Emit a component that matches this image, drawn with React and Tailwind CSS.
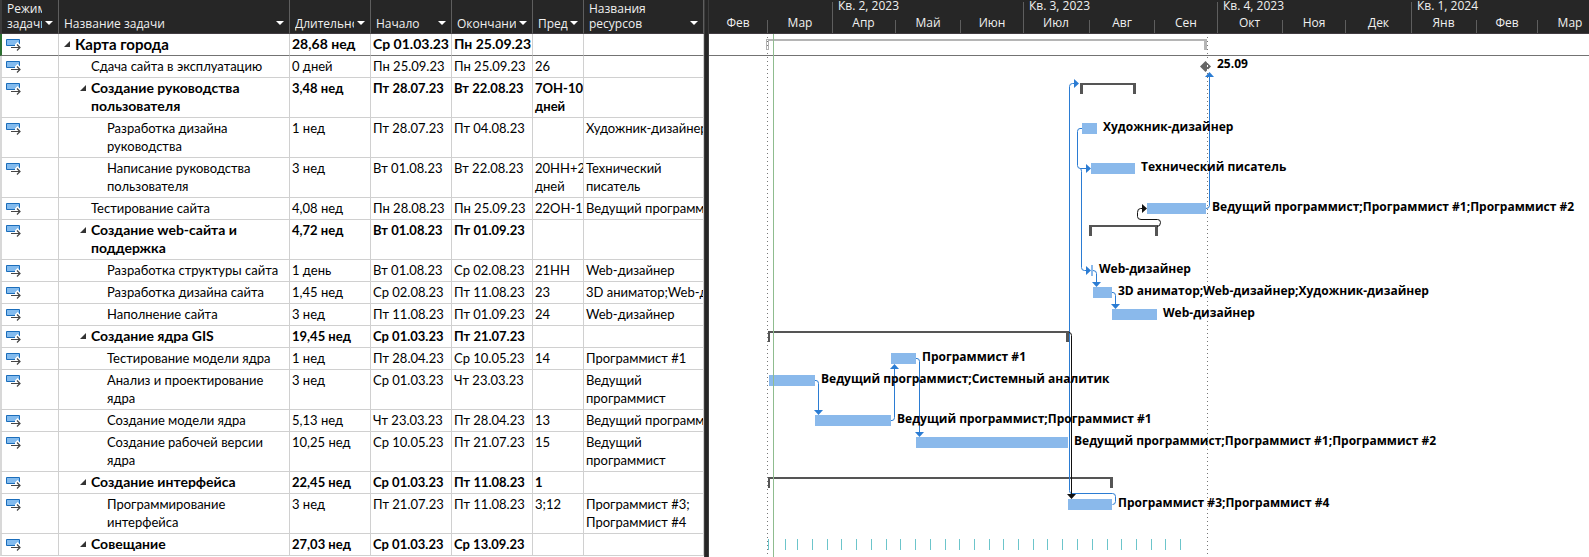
import React from "react";

const columns = [
  { label: "Режим\nзадачи", clip: "w-[35px]" },
  { label: "Название задачи", clip: "" },
  { label: "Длительность", clip: "w-[59px]" },
  { label: "Начало", clip: "" },
  { label: "Окончание", clip: "w-[59px]" },
  { label: "Пред", clip: "" },
  { label: "Названия\nресурсов", clip: "" },
];

const tasks = [
  { level: 0, summary: true, name: "Карта города", dur: "28,68 нед", start: "Ср 01.03.23", end: "Пн 25.09.23", pred: "", res: "" },
  { level: 1, name: "Сдача сайта в эксплуатацию", dur: "0 дней", start: "Пн 25.09.23", end: "Пн 25.09.23", pred: "26", res: "" },
  { level: 1, summary: true, name: "Создание руководства\nпользователя", dur: "3,48 нед", start: "Пт 28.07.23", end: "Вт 22.08.23", pred: "7ОН-10\nдней", res: "" },
  { level: 2, name: "Разработка дизайна\nруководства", dur: "1 нед", start: "Пт 28.07.23", end: "Пт 04.08.23", pred: "", res: "Художник-дизайнер" },
  { level: 2, name: "Написание руководства\nпользователя", dur: "3 нед", start: "Вт 01.08.23", end: "Вт 22.08.23", pred: "20НН+2\nдней", res: "Технический\nписатель" },
  { level: 1, name: "Тестирование сайта", dur: "4,08 нед", start: "Пн 28.08.23", end: "Пн 25.09.23", pred: "22ОН-1", res: "Ведущий программист" },
  { level: 1, summary: true, name: "Создание web-сайта и\nподдержка", dur: "4,72 нед", start: "Вт 01.08.23", end: "Пт 01.09.23", pred: "", res: "" },
  { level: 2, name: "Разработка структуры сайта", dur: "1 день", start: "Вт 01.08.23", end: "Ср 02.08.23", pred: "21НН", res: "Web-дизайнер" },
  { level: 2, name: "Разработка дизайна сайта", dur: "1,45 нед", start: "Ср 02.08.23", end: "Пт 11.08.23", pred: "23", res: "3D аниматор;Web-дизайнер" },
  { level: 2, name: "Наполнение сайта", dur: "3 нед", start: "Пт 11.08.23", end: "Пт 01.09.23", pred: "24", res: "Web-дизайнер" },
  { level: 1, summary: true, name: "Создание ядра GIS", dur: "19,45 нед", start: "Ср 01.03.23", end: "Пт 21.07.23", pred: "", res: "" },
  { level: 2, name: "Тестирование модели ядра", dur: "1 нед", start: "Пт 28.04.23", end: "Ср 10.05.23", pred: "14", res: "Программист #1" },
  { level: 2, name: "Анализ и проектирование\nядра", dur: "3 нед", start: "Ср 01.03.23", end: "Чт 23.03.23", pred: "", res: "Ведущий\nпрограммист" },
  { level: 2, name: "Создание модели ядра", dur: "5,13 нед", start: "Чт 23.03.23", end: "Пт 28.04.23", pred: "13", res: "Ведущий программист" },
  { level: 2, name: "Создание рабочей версии\nядра", dur: "10,25 нед", start: "Ср 10.05.23", end: "Пт 21.07.23", pred: "15", res: "Ведущий\nпрограммист" },
  { level: 1, summary: true, name: "Создание интерфейса", dur: "22,45 нед", start: "Ср 01.03.23", end: "Пт 11.08.23", pred: "1", res: "" },
  { level: 2, name: "Программирование\nинтерфейса", dur: "3 нед", start: "Пт 21.07.23", end: "Пт 11.08.23", pred: "3;12", res: "Программист #3;\nПрограммист #4" },
  { level: 1, summary: true, name: "Совещание", dur: "27,03 нед", start: "Ср 01.03.23", end: "Ср 13.09.23", pred: "", res: "" },
];

const indent = ["pl-[5px]", "pl-[21px]", "pl-[48px]"];

const quarters = [
  { label: "", months: [["Фев", "w-[58px]"], ["Мар", "w-[65px]"]] },
  { label: "Кв. 2, 2023", months: [["Апр", "w-[63px]"], ["Май", "w-[65px]"], ["Июн", "w-[63px]"]] },
  { label: "Кв. 3, 2023", months: [["Июл", "w-[66px]"], ["Авг", "w-[65px]"], ["Сен", "w-[63px]"]] },
  { label: "Кв. 4, 2023", months: [["Окт", "w-[65px]"], ["Ноя", "w-[63px]"], ["Дек", "w-[66px]"]] },
  { label: "Кв. 1, 2024", months: [["Янв", "w-[65px]"], ["Фев", "w-[61px]"], ["Мар", "w-[65px]"]] },
];

/* Chart geometry: x from the left edge of the timeline, y from the first row. */
const bars = [
  [373, 89, 15, "Художник-дизайнер"],
  [382, 129, 44, "Технический писатель"],
  [438, 169, 59, "Ведущий программист;Программист #1;Программист #2"],
  [382, 231, 2, "Web-дизайнер"],
  [384, 253, 19, "3D аниматор;Web-дизайнер;Художник-дизайнер"],
  [403, 275, 45, "Web-дизайнер"],
  [182, 319, 25, "Программист #1"],
  [60, 341, 46, "Ведущий программист;Системный аналитик"],
  [106, 381, 76, "Ведущий программист;Программист #1"],
  [207, 403, 152, "Ведущий программист;Программист #1;Программист #2"],
  [359, 465, 44, "Программист #3;Программист #4"],
];

const brackets = [
  [371, 49, 56, 3],
  [380, 191, 69, 3],
  [59, 297, 301, 2],
  [59, 443, 345, 2],
];

const links = [
  "M403.5 470.5 q3 0 3 -3 v-5 q0 -3 -3 -3 H362.5 q-2 0 -2 -3 V52.5 q0 -3 3 -3 h2",
  "M373 94.5 h-2 q-2.5 0 -2.5 3 V131.5 q0 3 3 3 h6",
  "M371 134.5 q1.500 0 1.500 3 V233.5 q0 3 3 3 h2",
  "M497 174.500 q3.500 0 3.500 -3 V42",
  "M384 236.500 q3.500 0 3.500 3 V248",
  "M403 258.500 h1 q2.500 0 2.500 3 V270",
  "M106 346.500 h1 q2.500 0 2.500 3 V376",
  "M182 386.500 h1 q2.500 0 2.500 -3 V335",
  "M207 324.500 h1 q2.500 0 2.500 3 V398",
];

const heads = [
  "M365 45 l5 4.500 l-5 4.500z",
  "M377 130 l5 4.500 l-5 4.500z",
  "M377 232 l5 4.500 l-5 4.500z",
  "M496 43 l4.500 -5 l4.500 5z",
  "M383 248 h9 l-4.500 5z",
  "M402 270 h9 l-4.500 5z",
  "M105 376 h9 l-4.500 5z",
  "M181 335 h9 l-4.500 -5z",
  "M206 398 h9 l-4.500 5z",
];

const meetings = [
  59, 76, 88, 103, 118, 132, 147, 162, 177, 191, 206, 221, 236, 250, 265, 280, 294,
  309, 324, 338, 353, 368, 383, 398, 412, 427, 442, 456, 471,
];

function ModeIcon() {
  return (
    <svg width="16" height="13" viewBox="0 0 16 13" className="ml-1 block" aria-hidden="true">
      <path d="M0.500 0.500H13.500V6.500H0.500Z" fill="#83bbee" stroke="#1a6dbb" />
      <path d="M9 5.500L11.500 3L15 6.500V11H11L9 10H4V7H9Z" fill="#fff" />
      <path d="M5 8.500H14M11 5.500L14 8.500L11 11.500" fill="none" stroke="#444" strokeWidth="1.200" />
    </svg>
  );
}

function TaskRow({ task, first }) {
  const weight = task.summary ? "font-bold" : "font-normal";
  const nameSize = first ? "text-[15px]" : task.summary ? "text-[14px]" : "text-[13px]";
  const size = first ? "text-[14px]" : "text-[13px]";
  const line = first ? "border-[#737373]" : "border-[#d0d0d0]";
  const base = `overflow-hidden border-r border-b border-r-[#d0d0d0] pt-px pb-[2px] align-top leading-[18px] whitespace-pre ${line} ${weight}`;
  const cell = `${base} pl-[2px] ${size}`;
  return (
    <tr>
      <td className={`border-b border-l-2 ${first ? "border-l-[#2c7031]" : "border-l-[#d8d8d8]"} border-r border-r-[#d0d0d0] pt-[5px] align-top ${line}`}>
        <ModeIcon />
      </td>
      <td className={`${base} ${nameSize} ${indent[task.level]}`}>
        <div className="flex">
          {task.summary && (
            <button type="button" aria-label="Свернуть" className="flex h-[18px] w-[11px] shrink-0 items-center">
              <svg width="6" height="6" viewBox="0 0 6 6" aria-hidden="true">
                <path d="M0 6L6 0V6Z" fill="#333" />
              </svg>
            </button>
          )}
          <span className={!task.summary && task.level === 1 ? "pl-[11px]" : ""}>{task.name}</span>
        </div>
      </td>
      <td className={cell}>{task.dur}</td>
      <td className={cell}>{task.start}</td>
      <td className={cell}>{task.end}</td>
      <td className={cell}>{task.pred}</td>
      <td className={cell}>{task.res}</td>
    </tr>
  );
}

function TaskTable() {
  return (
    <table className="w-[704px] table-fixed border-separate border-spacing-0 font-['Lato','Noto_Sans',sans-serif] text-black">
      <colgroup>
        <col className="w-[59px]" />
        <col className="w-[231px]" />
        <col className="w-[81px]" />
        <col className="w-[81px]" />
        <col className="w-[81px]" />
        <col className="w-[51px]" />
        <col className="w-[120px]" />
      </colgroup>
      <thead>
        <tr className="bg-[#262626] font-['Open_Sans','Noto_Sans',sans-serif] text-[12px] leading-[15px] text-[#f0f0f0]">
          {columns.map((c, i) => (
            <th
              key={c.label}
              scope="col"
              className={`h-[34px] overflow-hidden border-r border-b border-r-[#5e5e5e] border-b-[#413c41] p-0 pr-[5px] pb-[2px] pl-[5px] text-left align-bottom font-normal ${i === 0 ? "border-l-2 border-l-[#3c3c3c]" : ""}`}
            >
              <div className="flex items-end justify-between">
                <span className={`shrink-0 overflow-hidden whitespace-pre ${c.clip}`}>{c.label}</span>
                <button type="button" aria-label="Фильтр" className="flex h-[10px] shrink-0 items-start">
                  <svg width="8" height="4" viewBox="0 0 8 4" aria-hidden="true">
                    <path d="M0 0H8L4 4Z" fill="#fff" />
                  </svg>
                </button>
              </div>
            </th>
          ))}
        </tr>
      </thead>
      <tbody>
        {tasks.map((t, i) => (
          <TaskRow key={t.name} task={t} first={i === 0} />
        ))}
      </tbody>
    </table>
  );
}

function TimeScale() {
  return (
    <div className="flex h-[34px] overflow-hidden border-b border-[#413c41] bg-[#262626] text-[12px] text-[#f0f0f0]">
      {quarters.map((q, i) => (
        <div key={i} className="flex shrink-0 flex-col pt-[2px]">
          <div className={`flex grow flex-col ${i ? "border-l border-[#5e5e5e]" : ""}`}>
            <div className="h-[18px] pl-[5px] leading-[8px]">{q.label}</div>
            <div className={`flex ${i ? "-ml-px" : ""}`}>
              {q.months.map(([m, w], j) => (
                <div key={m} className={`h-[13px] shrink-0 text-center leading-[6px] ${w} ${j ? "border-l border-[#5e5e5e]" : ""}`}>
                  {m}
                </div>
              ))}
            </div>
          </div>
        </div>
      ))}
    </div>
  );
}

function Chart() {
  return (
    <div className="relative grow overflow-hidden">
      <svg className="absolute inset-0 h-full w-full" aria-hidden="true" shapeRendering="crispEdges">
        <path d="M0 21.500H4000" stroke="#737373" />
        <path d="M58.500 3V520M498.500 3V523" stroke="#777" strokeDasharray="1 3" />
        <g fill="#555">
          {brackets.map(([x, y, w, l]) => (
            <path key={y} d={`M${x} ${y}h${w}v11h-3v-9H${x + l}v9h-${l}z`} />
          ))}
        </g>
        <path d="M57.500 5.500h2v10h-2z" fill="none" stroke="#b1b1b1" />
        <path d="M60 5H498V16H495V7H60z" fill="#b5b5b5" />
        <path d="M491 32.500L496.500 27L502 32.500L496.500 38Z" fill="#666" shapeRendering="auto" />
        <path d="M498.500 27V38" stroke="#fff" strokeDasharray="2 2" />
        <g fill="#8ab9eb">
          {bars.map(([x, y, w]) => (
            <rect key={y} x={x} y={y} width={w} height="11" />
          ))}
        </g>
        <path d="M64.500 0V4000" stroke="#8fbc8f" />
        <g fill="none" stroke="#2b7cd3" shapeRendering="auto">
          {links.map((d) => (
            <path key={d} d={d} />
          ))}
        </g>
        <g fill="#2b7cd3" shapeRendering="auto">
          {heads.map((d) => (
            <path key={d} d={d} />
          ))}
        </g>
        <g fill="none" stroke="#111" shapeRendering="auto">
          <path d="M448 192.500 q3.500 0 3.500 -4 q0 -3 -3 -3 H432 q-3.500 0 -3.500 -3 v-4 q0 -4 3 -4 h3" />
          <path d="M360 298.500 q2.500 0 2.500 3 V461" />
        </g>
        <path d="M433 170l5 4.500l-5 4.500zM358 460h9l-4.500 5z" fill="#111" shapeRendering="auto" />
        <path d={meetings.map((x) => `M${x}.5 505v11`).join("")} stroke="#6cc5cb" />
      </svg>
      <div className="text-[12px] leading-[16px] font-bold whitespace-nowrap text-black">
        <span className="absolute" style={{ left: 508, top: 22 }}>25.09</span>
        {bars.map(([x, y, w, label]) => (
          <span key={y} className="absolute" style={{ left: x + w + 6, top: y - 4 }}>
            {label}
          </span>
        ))}
      </div>
    </div>
  );
}

export default function App() {
  return (
    <div className="flex h-screen w-full overflow-hidden bg-white">
      <div className="shrink-0 overflow-hidden">
        <TaskTable />
      </div>
      <div className="w-[5px] shrink-0 border-x border-[#3c3c3c] bg-[#262626]" />
      <div className="flex min-w-0 grow flex-col font-['Open_Sans','Noto_Sans',sans-serif]">
        <TimeScale />
        <Chart />
      </div>
    </div>
  );
}
